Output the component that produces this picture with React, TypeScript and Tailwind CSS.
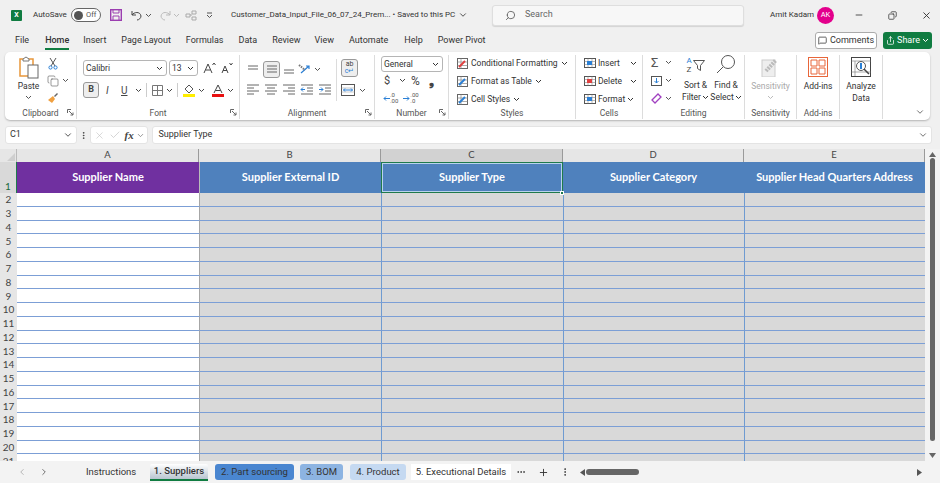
import React from "react";
import { ChevronDown, ChevronLeft, ChevronRight, Check, Minus, MoreHorizontal, MoreVertical, Plus, Search, X, MessageSquare, Share, Copy } from "lucide-react";

const Chev = ({ className = "" }: { className?: string }) => (
  <svg width="7" height="5" viewBox="0 0 7 5" className={`shrink-0 ${className}`}>
    <path d="M1 1l2.5 2.5L6 1" fill="none" stroke="currentColor" strokeWidth="1" />
  </svg>
);

const Lines = ({ rows, arrow }: { rows: number[][]; arrow?: string }) => (
  <svg width="14" height="12" viewBox="0 0 14 12" className="shrink-0">
    {rows.map((r, i) => (
      <path key={i} d={`M${r[0]} ${r[2]}H${r[1]}`} stroke="#666" strokeWidth="1" />
    ))}
    {arrow && <path d={arrow} stroke="#2a7fd5" fill="none" strokeWidth="1" />}
  </svg>
);

const Group = ({ label, width, launcher = false, children, className = "" }: { label: string; width: string; launcher?: boolean; children?: React.ReactNode; className?: string }) => (
  <div className={`relative flex h-full shrink-0 flex-col border-r border-[#dcdcdc] ${width}`}>
    <div className={`h-[52px] shrink-0 ${className}`}>{children}</div>
    <div className="text-center text-[8.5px] leading-[12px] text-[#555]">{label}</div>
    {launcher && (
      <svg width="8" height="8" viewBox="0 0 8 8" className="absolute right-[1px] bottom-[2px]">
        <path d="M.5 4V.5H4M2 2l4 4M6 3.5V6H3.5" fill="none" stroke="#666" strokeWidth="1" />
      </svg>
    )}
  </div>
);

const Select = ({ text, className }: { text: string; className: string }) => (
  <div className={`flex h-[16px] items-center justify-between rounded-[3px] border border-[#b5b5b5] bg-white pl-[2px] pr-[3px] text-[8.5px] text-[#333] ${className}`}>
    {text}
    <Chev />
  </div>
);

const StyleRow = ({ color, text }: { color: string; text: string }) => (
  <div className="flex h-[18px] items-center gap-[3px] whitespace-nowrap text-[8.5px] text-[#333]">
    <svg width="11" height="11" viewBox="0 0 11 11" className="shrink-0">
      <rect x=".5" y=".5" width="10" height="10" fill="#fff" stroke="#666" />
      <path d="M.5 4h10M.5 7.5h10M4 .5v10" stroke="#888" strokeWidth=".7" />
      <path d="M2 9l6-6" stroke={color} strokeWidth="2" />
    </svg>
    {text}
    <Chev />
  </div>
);

const CellRow = ({ text, badge, chevGap }: { text: string; badge: string; chevGap: string }) => (
  <div className="flex h-[18px] items-center whitespace-nowrap text-[8.5px] text-[#333]">
    <svg width="12" height="10" viewBox="0 0 12 10" className="mr-[2px] shrink-0">
      <rect x=".5" y=".5" width="11" height="9" fill="#fff" stroke="#555" />
      <path d="M.5 3.500h11M.5 6.500h11M4 .5v9M8 .5v9" stroke="#888" strokeWidth=".6" />
      <rect x="3" y="3" width="5" height="4" fill={badge} />
    </svg>
    {text}
    <Chev className={chevGap} />
  </div>
);

const Ribbon = () => (
  <div className="mx-[5px] mt-px flex h-[68px] w-[925px] rounded-[5px] bg-white pt-[3px] pb-px shadow-[0_1px_2px_rgba(0,0,0,0.25)]">
    <Group label="Clipboard" width="w-[72px]" launcher className="flex pl-[8px]">
      <div className="flex w-[31px] flex-col items-center pt-[1px]">
        <svg width="22" height="23" viewBox="0 0 22 23">
          <rect x="2" y="3" width="13" height="17" fill="#fff" stroke="#e8963a" strokeWidth="1.5" />
          <path d="M5 3l3-2 3 2v2H5z" fill="#fff" stroke="#777" />
          <rect x="10" y="9" width="10" height="13" fill="#fff" stroke="#666" />
        </svg>
        <span className="mt-[1px] text-[8.5px] leading-[12px] text-[#333]">Paste</span>
        <Chev className="mt-[3px] text-[#555]" />
      </div>
      <div className="ml-[3px] flex flex-col">
        <div className="flex h-[18px] items-center pl-[1px]">
          <svg width="10" height="13" viewBox="0 0 10 13"><path d="M2 1l5 8M8 1L3 9" stroke="#555" fill="none" /><circle cx="2.5" cy="10.5" r="1.6" fill="none" stroke="#2a7fd5" /><circle cx="7.5" cy="10.5" r="1.6" fill="none" stroke="#2a7fd5" /></svg>
        </div>
        <div className="flex h-[18px] items-center gap-[3px] text-[#555]"><Copy size={12} strokeWidth={1.2} /><Chev /></div>
        <div className="flex h-[18px] items-center">
          <svg width="12" height="12" viewBox="0 0 12 12"><path d="M1 8l5-4 2 3-3 4z" fill="#f0a040" /><path d="M7 4l3-3 1 1-3 3z" fill="#666" /></svg>
        </div>
      </div>
    </Group>
    <Group label="Font" width="w-[163px]" launcher className="pl-[6px] pt-[5px]">
      <div className="flex items-center">
        <Select text="Calibri" className="w-[84px]" />
        <Select text="13" className="ml-[2px] w-[29px]" />
        <svg width="13" height="12" viewBox="0 0 13 12" className="ml-[5px]"><path d="M1 11L5 2l4 9M2.500 8h5M9.500 3l1.500-2 1.500 2" fill="none" stroke="#444" /></svg>
        <svg width="12" height="12" viewBox="0 0 12 12" className="ml-[5px]"><path d="M1 11l3-7 3 7M2 8.500h4M8.500 1l1.500 2 1.500-2" fill="none" stroke="#444" /></svg>
      </div>
      <div className="mt-[6px] flex items-center text-[#444]">
        <div className="flex h-[16px] w-[16px] items-center justify-center rounded-[3px] border border-[#999] bg-[#eeeeee] text-[9px] font-bold">B</div>
        <span className="ml-[7px] w-[6px] text-[10px] italic">I</span>
        <span className="ml-[9px] w-[9px] text-[10px] underline">U</span>
        <Chev className="ml-[5px]" />
        <div className="mx-[4px] h-[14px] w-px bg-[#ccc]" />
        <svg width="11" height="11" viewBox="0 0 11 11" className="ml-[1px]"><path d="M.5.5h10v10H.5zM5.500.5v10M.5 5.500h10" fill="none" stroke="#777" /></svg>
        <Chev className="ml-[3px]" />
        <div className="mx-[4px] h-[14px] w-px bg-[#ccc]" />
        <svg width="12" height="13" viewBox="0 0 12 13" className="ml-[1px]"><path d="M6 1l4 4-4 4-4-4z" fill="#fff" stroke="#555" /><rect y="10" width="12" height="3" fill="#ffee00" /></svg>
        <Chev className="ml-[3px]" />
        <svg width="12" height="13" viewBox="0 0 12 13" className="ml-[7px]"><path d="M2 9l4-8 4 8M3.500 6.500h5" fill="none" stroke="#444" /><rect y="10" width="12" height="3" fill="#e81010" /></svg>
        <Chev className="ml-[3px]" />
      </div>
    </Group>
    <Group label="Alignment" width="w-[135px]" launcher className="flex pl-[6px] pt-[4px]">
      <div className="flex h-[42px] w-[91px] flex-col border-r border-[#dcdcdc]">
        <div className="flex h-[20px] items-center">
          <Lines rows={[[2, 12, 3], [2, 12, 6]]} />
          <div className="ml-[3px] flex h-[17px] w-[17px] items-center justify-center rounded-[3px] border border-[#999] bg-[#eeeeee]"><Lines rows={[[2, 12, 3], [2, 12, 6], [2, 12, 9]]} /></div>
          <div className="ml-[2px]"><Lines rows={[[2, 12, 7], [2, 12, 10]]} /></div>
          <svg width="14" height="12" viewBox="0 0 14 12" className="ml-[2px]"><path d="M3 10l8-7M8 3h3v3" fill="none" stroke="#2a7fd5" strokeWidth="1.2" /><path d="M1 2l6 5" stroke="#777" strokeWidth="2" strokeDasharray="1.500 1" /></svg>
          <Chev className="ml-[2px] text-[#555]" />
        </div>
        <div className="flex h-[20px] items-center gap-[4px]">
          <Lines rows={[[1, 13, 2], [1, 8, 5], [1, 13, 8], [1, 8, 11]]} />
          <Lines rows={[[1, 13, 2], [3, 11, 5], [1, 13, 8], [3, 11, 11]]} />
          <Lines rows={[[1, 13, 2], [6, 13, 5], [1, 13, 8], [6, 13, 11]]} />
          <Lines arrow="M5 6.500H1M3 4.500l-2 2 2 2" rows={[[1, 13, 2], [7, 13, 5], [7, 13, 8], [1, 13, 11]]} />
          <Lines arrow="M1 6.500h4M3 4.500l2 2-2 2" rows={[[1, 13, 2], [7, 13, 5], [7, 13, 8], [1, 13, 11]]} />
        </div>
      </div>
      <div className="ml-[4px] flex flex-col">
        <div className="flex h-[18px] w-[17px] flex-col items-center justify-center rounded-[3px] border border-[#999] bg-[#eeeeee] text-[7px] leading-[7px] text-[#444]">
          <span>ab</span>
          <span className="text-[#2a7fd5]">c↵</span>
        </div>
        <div className="mt-[3px] flex h-[20px] items-center gap-[4px] text-[#555]">
          <svg width="14" height="12" viewBox="0 0 14 12"><rect x=".5" y=".5" width="13" height="11" fill="#fff" stroke="#555" /><path d="M.5 4h13M.5 8h13" stroke="#aaa" strokeWidth=".6" /><path d="M2.500 6h9M4 4.500L2.500 6 4 7.500M10 4.500L11.500 6 10 7.500" fill="none" stroke="#2a7fd5" /></svg>
          <Chev />
        </div>
      </div>
    </Group>
    <Group label="Number" width="w-[74px]" launcher className="pl-[6px] pt-px">
      <Select text="General" className="w-[62px]" />
      <div className="flex h-[17px] items-center text-[#444]">
        <span className="ml-[3px] w-[10px] text-[11px] leading-none">$</span>
        <Chev className="ml-[5px]" />
        <span className="ml-[5px] text-[12px] leading-none">%</span>
        <span className="ml-[9px] font-bold text-[13px] leading-none">❟</span>
      </div>
      <div className="flex h-[18px] items-center gap-[5px] pl-[2px]">
        <div className="flex items-center">
          <svg width="7" height="7" viewBox="0 0 7 7"><path d="M7 3.500H1M3 1.500l-2 2 2 2" fill="none" stroke="#2a7fd5" /></svg>
          <div className="flex flex-col text-[6px] leading-[6px] text-[#555]"><span>.0</span><span>.00</span></div>
        </div>
        <div className="flex items-center">
          <svg width="7" height="7" viewBox="0 0 7 7"><path d="M0 3.500h6M4 1.500l2 2-2 2" fill="none" stroke="#2a7fd5" /></svg>
          <div className="flex flex-col text-[6px] leading-[6px] text-[#555]"><span>.00</span><span>.0</span></div>
        </div>
      </div>
    </Group>
    <Group label="Styles" width="w-[127px]" className="pl-[8px]">
      <div className="-mt-[1px]">
        <StyleRow color="#e04040" text="Conditional Formatting" />
        <StyleRow color="#2a7fd5" text="Format as Table" />
        <StyleRow color="#2a7fd5" text="Cell Styles" />
      </div>
    </Group>
    <Group label="Cells" width="w-[67px]" className="pl-[8px]">
      <div className="-mt-[1px]">
        <CellRow text="Insert" badge="#2a7fd5" chevGap="ml-[10px]" />
        <CellRow text="Delete" badge="#e04040" chevGap="ml-[8px]" />
        <CellRow text="Format" badge="#2a7fd5" chevGap="ml-[2px]" />
      </div>
    </Group>
    <Group label="Editing" width="w-[102px]" className="flex pl-[8px]">
      <div className="-mt-[1px] flex w-[29px] flex-col text-[#555]">
        <div className="flex h-[18px] items-center gap-[3px]"><span className="w-[11px] text-[13px] leading-none">Σ</span><Chev /></div>
        <div className="flex h-[18px] items-center gap-[3px]">
          <svg width="11" height="10" viewBox="0 0 11 10"><rect x=".5" y=".5" width="10" height="9" fill="none" stroke="#555" /><path d="M5.500 2v5M3.500 5l2 2 2-2" stroke="#2a7fd5" fill="none" /></svg>
          <Chev />
        </div>
        <div className="flex h-[18px] items-center gap-[3px]">
          <svg width="11" height="11" viewBox="0 0 11 11"><path d="M1 7l6-6 3 3-6 6z" fill="#fff" stroke="#a040c0" strokeWidth="1.300" /></svg>
          <Chev />
        </div>
      </div>
      <div className="flex w-[31px] flex-col items-center">
        <div className="flex h-[19px] items-center">
          <div className="flex flex-col text-[8px] leading-[9px]"><span className="text-[#2a7fd5]">A</span><span className="text-[#444]">Z</span></div>
          <svg width="12" height="12" viewBox="0 0 12 12" className="ml-[1px]"><path d="M.5 1.500h11l-4 5v5l-3-2v-3z" fill="#fff" stroke="#555" /></svg>
        </div>
        <span className="mt-[5px] whitespace-nowrap text-[8.5px] leading-[12px] text-[#333]">Sort &amp;</span>
        <span className="flex items-center gap-[1px] whitespace-nowrap text-[8.5px] leading-[12px] text-[#333]">Filter<Chev /></span>
      </div>
      <div className="flex w-[30px] flex-col items-center">
        <svg width="20" height="19" viewBox="0 0 20 19"><circle cx="12" cy="7" r="6.500" fill="none" stroke="#555" /><path d="M7 12l-6 6" stroke="#555" /></svg>
        <span className="mt-[5px] whitespace-nowrap text-[8.5px] leading-[12px] text-[#333]">Find &amp;</span>
        <span className="flex items-center gap-[1px] whitespace-nowrap text-[8.5px] leading-[12px] text-[#333]">Select<Chev /></span>
      </div>
    </Group>
    <Group label="Sensitivity" width="w-[52px]" className="flex flex-col items-center pt-[2px] text-[#bbb]">
      <svg width="20" height="20" viewBox="0 0 20 20"><rect x="1" y="3" width="13" height="17" fill="#eee" stroke="#ccc" /><path d="M5 14L15 3" stroke="#bbb" strokeWidth="4" strokeDasharray="2 1" /></svg>
      <span className="mt-[3px] text-[8.5px] leading-[12px] text-[#aaa]">Sensitivity</span>
      <Chev className="mt-[3px]" />
    </Group>
    <Group label="Add-ins" width="w-[43px]" className="flex flex-col items-center pt-[2px]">
      <svg width="20" height="20" viewBox="0 0 20 20"><rect x=".5" y=".5" width="19" height="19" fill="#fff" stroke="#e8663a" /><path d="M3 3h6v6H3zM11 3h6v6h-6zM3 11h6v6H3zM11 11h6v6h-6z" fill="none" stroke="#e8663a" /></svg>
      <span className="mt-[3px] text-[8.5px] leading-[12px] text-[#333]">Add-ins</span>
    </Group>
    <Group label="" width="w-[43px]" className="flex flex-col items-center pt-[2px]">
      <svg width="20" height="20" viewBox="0 0 20 20"><rect x=".5" y=".5" width="19" height="19" fill="#fff" stroke="#444" /><path d="M.5 4h19M.5 15h19M4 4v15" stroke="#888" strokeWidth=".7" /><circle cx="10" cy="9" r="4.500" fill="#fff" stroke="#555" /><rect x="9" y="6" width="2" height="6" fill="#2a7fd5" /><path d="M13 12l5 5" stroke="#444" strokeWidth="1.500" /></svg>
      <span className="mt-[3px] text-[8.5px] leading-[12px] text-[#333]">Analyze</span>
      <span className="text-[8.5px] leading-[12px] text-[#333]">Data</span>
    </Group>
    <div className="flex flex-1 items-end justify-end pb-[2px] pr-[5px] text-[#555]"><ChevronDown size={10} /></div>
  </div>
);

const Header = ({ text, tone }: { text: string; tone: string }) => (
  <div className={`flex h-[31px] items-center justify-center text-[11px] font-bold text-white ${tone}`}>{text}</div>
);

export default function App() {
  const rows = Array.from({ length: 20 }, (_, i) => i + 2);
  return (
    <div className="flex h-[483px] w-[940px] flex-col overflow-hidden bg-[#f0f0f0] font-['Roboto',sans-serif] text-[#333]">
      {/* title bar */}
      <div className="flex h-[30px] shrink-0 items-center text-[8px]">
        <div className="ml-[11px] flex h-[11px] w-[11px] items-center justify-center rounded-[1px] bg-[#107c41] text-[7px] font-bold text-white">X</div>
        <span className="ml-[11px] w-[33px]">AutoSave</span>
        <div className="ml-[5px] flex h-[14px] w-[30px] items-center rounded-full border border-[#666] bg-white pl-[2px] text-[7.5px] text-[#555]">
          <span className="h-[9px] w-[9px] rounded-full bg-[#555]" />
          <span className="ml-[3px]">Off</span>
        </div>
        <svg width="12" height="12" viewBox="0 0 12 12" className="ml-[9px]"><rect x=".7" y=".7" width="10.600" height="10.600" fill="none" stroke="#9b3db0" strokeWidth="1.400" /><path d="M3 1v3h6V1M3 11V7h6v4" fill="none" stroke="#9b3db0" /></svg>
        <svg width="11" height="11" viewBox="0 0 11 11" className="ml-[9px]"><path d="M1 1v4h4M1 5c2-3 8-4 9 1 0 2-2 4-4 4" fill="none" stroke="#444" /></svg>
        <Chev className="ml-[3px] text-[#555]" />
        <svg width="11" height="11" viewBox="0 0 11 11" className="ml-[8px]"><path d="M10 1v4H6M10 5C8 2 2 1 1 6c0 2 2 4 4 4" fill="none" stroke="#bbb" /></svg>
        <Chev className="ml-[2px] text-[#bbb]" />
        <svg width="12" height="11" viewBox="0 0 12 11" className="ml-[5px]"><path d="M1 4h4v3H1zM7 1h4v3H7zM7 7h4v3H7zM5 5h2" fill="none" stroke="#aaa" /></svg>
        <svg width="7" height="7" viewBox="0 0 7 7" className="ml-[9px]"><path d="M1 1h5M1 3l2.500 2.500L6 3" fill="none" stroke="#555" /></svg>
        <div className="ml-[18px] flex w-[261px] items-center whitespace-nowrap">
          Customer_Data_Input_File_06_07_24_Prem... • Saved to this PC
          <ChevronDown size={10} className="ml-[3px]" />
        </div>
        <div className="flex h-[21px] w-[252px] items-center rounded-[3px] border border-[#dedede] bg-[#f7f7f7] pl-[12px] text-[9px] text-[#666] shadow-[0_1px_1px_rgba(0,0,0,0.12)]">
          <Search size={11} className="-scale-x-100" />
          <span className="ml-[9px]">Search</span>
        </div>
        <span className="ml-[26px] w-[47px] whitespace-nowrap">Amit Kadam</span>
        <div className="flex h-[17px] w-[17px] items-center justify-center rounded-full bg-[#e3008c] text-[7.5px] text-white">AK</div>
        <Minus size={10} className="ml-[20px]" />
        <Copy size={9} className="ml-[24px] scale-x-[-1]" />
        <X size={11} className="ml-[24px]" />
      </div>
      {/* tabs */}
      <div className="flex h-[21px] shrink-0 items-center text-[9px]">
        <span className="ml-[15px]">File</span>
        <div className="relative ml-[16px] flex h-full items-center font-medium">
          Home
          <div className="absolute bottom-[1px] left-0 right-0 h-[2px] bg-[#107c41]" />
        </div>
        <span className="ml-[14px]">Insert</span>
        <span className="ml-[15px]">Page Layout</span>
        <span className="ml-[15px]">Formulas</span>
        <span className="ml-[15px]">Data</span>
        <span className="ml-[15px]">Review</span>
        <span className="ml-[14px]">View</span>
        <span className="ml-[15px]">Automate</span>
        <span className="ml-[16px]">Help</span>
        <span className="ml-[15px]">Power Pivot</span>
        <div className="ml-auto flex h-[17px] w-[62px] items-center justify-center gap-[3px] rounded-[3px] border border-[#aaa] bg-white">
          <MessageSquare size={9} />Comments
        </div>
        <div className="ml-[6px] mr-[8px] flex h-[17px] w-[49px] items-center justify-center gap-[2px] rounded-[3px] bg-[#107c41] text-white">
          <Share size={9} />Share<Chev />
        </div>
      </div>
      <Ribbon />
      {/* formula bar */}
      <div className="mt-[5px] flex h-[20px] shrink-0 items-center text-[9px]">
        <div className="ml-[5px] flex h-[18px] w-[72px] items-center justify-between rounded-[3px] border border-[#e4e4e4] bg-white pl-[4px] pr-[3px]">C1<ChevronDown size={10} /></div>
        <MoreVertical size={9} className="ml-[1.5px]" />
        <div className="ml-[2px] flex h-[18px] w-[58px] items-center gap-[4px] rounded-[3px] border border-[#e4e4e4] bg-white pl-[3px] text-[#bbb]">
          <X size={11} strokeWidth={1.2} />
          <Check size={12} strokeWidth={1.2} />
          <span className="font-['Liberation_Serif',serif] text-[11px] font-bold italic text-[#444]">fx</span>
          <ChevronDown size={9} className="-ml-[2px] text-[#777]" />
        </div>
        <div className="ml-[4px] flex h-[18px] w-[780px] items-center rounded-[3px] border border-[#e4e4e4] bg-white pl-[6px]">Supplier Type</div>
        <ChevronDown size={10} className="ml-[-14px] text-[#555]" />
      </div>
      {/* sheet */}
      <div className="mt-[4px] flex h-[312px] shrink-0 overflow-hidden font-['Lato',sans-serif]">
        <div className="grid h-full w-[925px] shrink-0 grid-cols-[17px_182px_182px_182px_181px_181px] content-start bg-[#d9d9d9]">
          <div className="flex h-[13px] items-end justify-end border-r border-[#bbb] bg-[#e6e6e6] pr-[1px] pb-[1px]">
            <svg width="8" height="8" viewBox="0 0 8 8"><path d="M8 0v8H0z" fill="#cfcfcf" /></svg>
          </div>
          {["A", "B", "C", "D", "E"].map((c) => (
            <div key={c} className={`flex h-[13px] items-center justify-center border-r border-[#9a9a9a] text-[9.5px] text-[#444] ${c === "C" ? "bg-[#d2d2d2] text-[#1a6b3c]" : "bg-[#e6e6e6]"}`}>{c}</div>
          ))}
          <div className="flex h-[31px] items-end justify-center border-r border-[#1f7a4c] bg-[#d9d9d9] text-[10px] leading-[13px] text-[#1a6b3c]">1</div>
          <Header text="Supplier Name" tone="bg-[#7030a0]" />
          <Header text="Supplier External ID" tone="bg-[#4f81bd] border-l border-[#bbb]" />
          <div className="relative">
            <Header text="Supplier Type" tone="bg-[#4f81bd] border border-[#1f7a4c] shadow-[inset_0_0_0_1px_#b9d3ec]" />
            <div className="absolute bottom-[-2px] right-[-1px] h-[4px] w-[4px] border border-white bg-[#1f7a4c]" />
          </div>
          <Header text="Supplier Category" tone="bg-[#4f81bd]" />
          <Header text="Supplier Head Quarters Address" tone="bg-[#4f81bd]" />
          {rows.map((r) => (
            <React.Fragment key={r}>
              <div className="flex h-[13.76px] items-center justify-center bg-[#e6e6e6] text-[10px] text-[#444]">{r}</div>
              <div className="h-[13.76px] border-b border-[#7c9fd6] bg-white" />
              <div className="h-[13.76px] border-b border-l border-[#7c9fd6] border-l-[#a6a6a6]" />
              <div className="h-[13.76px] border-b border-l border-[#7c9fd6] border-l-[#6f9bd1]" />
              <div className="h-[13.76px] border-b border-l border-[#7c9fd6] border-l-[#6f9bd1]" />
              <div className="h-[13.76px] border-b border-l border-[#7c9fd6] border-l-[#6f9bd1]" />
            </React.Fragment>
          ))}
        </div>
        <div className="flex w-[15px] flex-col items-center bg-[#f3f3f3] pt-[1px] text-[#666]">
          <svg width="7" height="5" viewBox="0 0 7 5" className="mt-[2px]"><path d="M0 5l3.500-5L7 5z" fill="#666" /></svg>
          <div className="mt-[1px] h-[283px] w-[5px] rounded-full bg-[#666]" />
          <svg width="7" height="5" viewBox="0 0 7 5" className="mt-auto mb-[3px]"><path d="M0 0l3.500 5L7 0z" fill="#666" /></svg>
        </div>
      </div>
      {/* sheet tabs */}
      <div className="flex h-[22px] shrink-0 items-center bg-[#f3f3f3] text-[9.5px]">
        <ChevronLeft size={10} className="ml-[17px] text-[#aaa]" />
        <ChevronRight size={10} className="ml-[12px] text-[#555]" />
        <span className="ml-[37px] w-[49px] whitespace-nowrap">Instructions</span>
        <div className="ml-[15px] flex h-[17px] w-[58px] items-center justify-center rounded-t-[2px] border-b-2 border-[#107c41] bg-gradient-to-b from-[#ffffff] to-[#b8c4d0] font-medium">1. Suppliers</div>
        <div className="ml-[7px] flex h-[16px] w-[79px] items-center justify-center rounded-[3px] bg-[#4a86d0]">2. Part sourcing</div>
        <div className="ml-[6px] flex h-[16px] w-[43px] items-center justify-center rounded-[3px] bg-[#8db4e2]">3. BOM</div>
        <div className="ml-[7px] flex h-[16px] w-[56px] items-center justify-center rounded-[3px] bg-[#c5d9f1]">4. Product</div>
        <div className="ml-[5px] flex h-[16px] w-[100px] items-center justify-center bg-white">5. Executional Details</div>
        <MoreHorizontal size={10} className="ml-[5px]" />
        <Plus size={11} className="ml-[12px]" />
        <MoreVertical size={10} className="ml-[11px]" />
        <svg width="5" height="7" viewBox="0 0 5 7" className="ml-[10px]"><path d="M5 0L0 3.500 5 7z" fill="#555" /></svg>
        <div className="ml-[1px] h-[6px] w-[53px] rounded-full bg-[#666]" />
        <svg width="5" height="7" viewBox="0 0 5 7" className="ml-[278px]"><path d="M0 0l5 3.500L0 7z" fill="#555" /></svg>
      </div>
    </div>
  );
}
